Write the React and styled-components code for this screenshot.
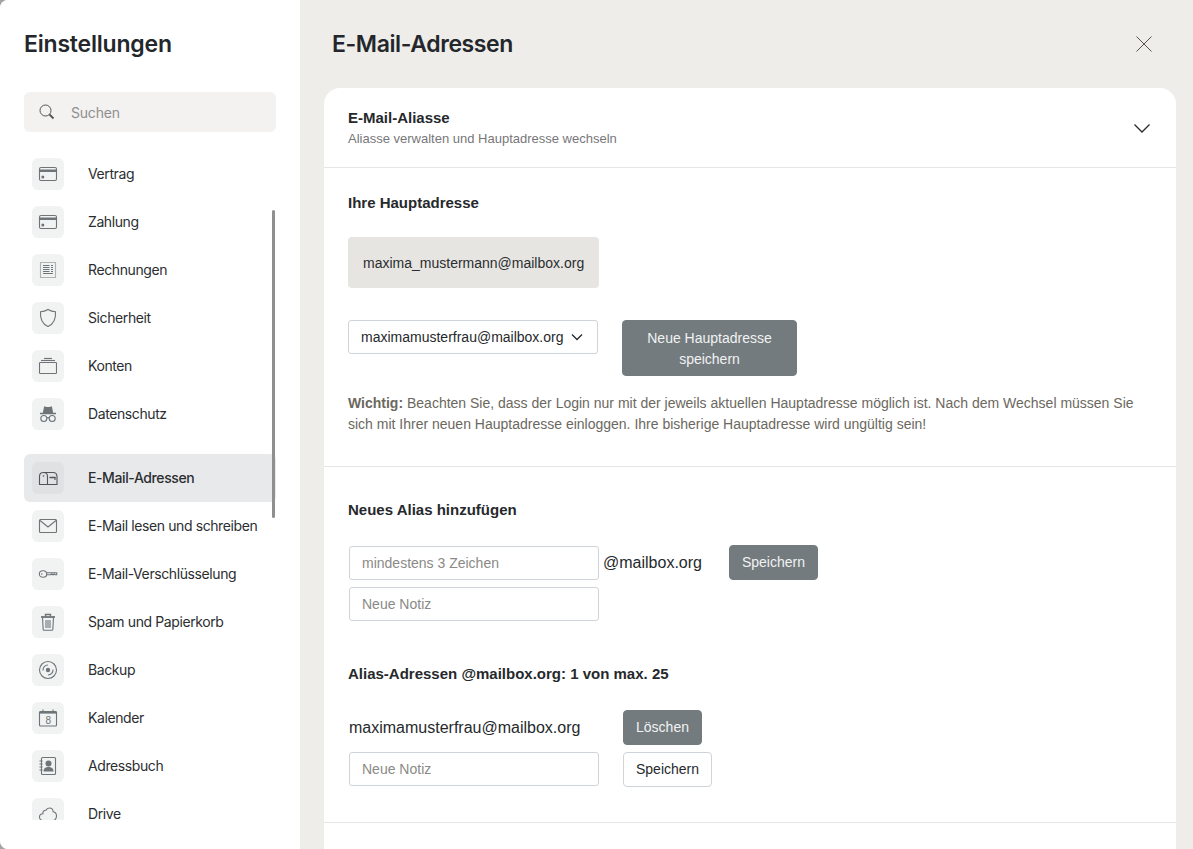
import React from "react";
import styled, { createGlobalStyle } from "styled-components";

const Global = createGlobalStyle`
  html, body { margin: 0; padding: 0; height: 100%; background: #a3a3a3; overflow: hidden; }
  * { box-sizing: border-box; }
  body { font-family: "Liberation Sans", Arial, sans-serif; }
`;

const Modal = styled.div`
  width: 1193px; height: 849px; display: flex; overflow: hidden;
  border-radius: 8px 0 0 8px; background: #eeede9;
`;
const Sidebar = styled.aside`
  width: 300px; flex: none; background: #fff; padding: 0 24px; position: relative;
  display: flex; flex-direction: column; height: 849px;
`;
const heading = `
  font-family: Inter, "Noto Sans", sans-serif; font-weight: 600; font-size: 23px;
  letter-spacing: -0.2px; color: #23272b; margin: 0; line-height: 28px;
`;
const SideTitle = styled.h1`${heading} padding-top: 30px; height: 92px;`;
const Search = styled.label`
  height: 40px; background: #f3f2f0; border-radius: 6px; display: flex; align-items: center;
  padding-left: 15px; gap: 16px; flex: none;
`;
const SearchInput = styled.input`
  border: 0; background: transparent; outline: 0; flex: 1; min-width: 0; padding: 0;
  font: 400 14px Inter, sans-serif; letter-spacing: -0.2px; color: #333;
  &::placeholder { color: #8f8f8f; opacity: 1; }
`;
const NavScroll = styled.nav`
  margin-top: 18px; height: 670px; overflow: hidden; flex: none;
`;
const NavGroup = styled.div`
  display: flex; flex-direction: column;
  & + & { margin-top: 16px; }
`;
const NavItem = styled.a`
  height: 48px; display: flex; align-items: center; padding-left: 8px; gap: 24px; flex: none;
  border-radius: 6px; background: ${p => (p.$active ? "#e8e9ea" : "transparent")};
  font: ${p => (p.$active ? 500 : 400)} 14px Inter, sans-serif; letter-spacing: -0.4px; color: #2b2e31;
`;
const NavLabel = styled.span`padding-bottom: 2px;`;
const IconBox = styled.span`
  width: 32px; height: 32px; border-radius: 6px; display: flex; align-items: center; justify-content: center;
  flex: none; background: ${p => (p.$active ? "#dfe1e2" : "#f1f2f2")};
`;
const ScrollThumb = styled.div`
  position: absolute; left: 272px; top: 210px; width: 3px; height: 308px; background: #8f8f8f; border-radius: 2px;
`;

const Main = styled.main`
  flex: 1; min-width: 0; padding: 0 17px 0 24px; display: flex; flex-direction: column;
`;
const MainHead = styled.header`
  height: 88px; flex: none; display: flex; align-items: center; justify-content: space-between;
  padding: 0 23px 0 8px;
`;
const MainTitle = styled.h2`${heading} letter-spacing: -0.4px;`;
const CloseBtn = styled.button`
  border: 0; background: transparent; padding: 0; width: 18px; height: 18px; display: flex;
`;
const Card = styled.section`
  background: #fff; border-radius: 16px 16px 0 0; flex: 1; overflow: hidden;
`;
const CardHead = styled.div`
  height: 80px; border-bottom: 1px solid #e6e6e6; padding: 21px 25px 0 24px; display: flex;
  justify-content: space-between; align-items: flex-start;
`;
const CardTitle = styled.div`font-size: 15px; font-weight: 700; color: #26292c; line-height: 18px;`;
const CardSub = styled.div`font-size: 13px; color: #77777a; line-height: 16px; margin-top: 4px;`;
const ChevronWrap = styled.span`display: flex; margin-top: 13px;`;
const Section = styled.div`
  padding: ${p => p.$pad || "26px 24px 0"}; height: ${p => p.$h}px; border-bottom: 1px solid #e6e6e6;
`;
const Label = styled.h3`
  margin: 0; font-size: 15px; font-weight: 700; color: #26292c; line-height: 18px;
`;
const Primary = styled.div`
  margin-top: 25px; width: 251px; height: 51px; background: #e7e5e1; border-radius: 4px; color: #2b2d30;
  font-size: 14px; display: flex; align-items: center; padding-left: 15px;
`;
const SelectRow = styled.div`display: flex; align-items: flex-start; gap: 24px; margin-top: 32px;`;
const Select = styled.div`
  width: 250px; height: 34px; border: 1px solid #cfd3da; border-radius: 3px; display: flex; align-items: center;
  justify-content: space-between; padding: 0 14px 0 12px; font-size: 14px; color: #26292c; background: #fff;
`;
const Btn = styled.button`
  font: 400 14px/21px "Liberation Sans", Arial, sans-serif; border-radius: 4px; text-align: center;
  padding: 0 12px; width: ${p => p.$w}px; height: ${p => p.$h}px; flex: none;
  background: ${p => (p.$outline ? "#fff" : "#737b7f")}; color: ${p => (p.$outline ? "#26292c" : "#f1f2f2")};
  border: 1px solid ${p => (p.$outline ? "#cfd3da" : "#737b7f")};
`;
const TallBtn = styled(Btn)`padding-top: 2px;`;
const RaisedBtn = styled(Btn)`align-self: flex-start; margin-top: -1px;`;
const Note = styled.p`
  margin: 17px 0 0; font-size: 14px; line-height: 21px; color: #6b6860;
  b { font-weight: 700; }
`;
const AliasGrid = styled.div`
  display: grid; grid-template-columns: 250px auto; column-gap: 4px; row-gap: 7px; margin: 27px 0 0 1px;
  justify-content: start; align-items: center;
`;
const Field = styled.input`
  width: 250px; height: 34px; border: 1px solid #cfd3da; border-radius: 3px; padding: 0 12px; background: #fff;
  font: 400 14px "Liberation Sans", Arial, sans-serif; outline: 0;
  &::placeholder { color: #8a8a86; opacity: 1; }
`;
const Domain = styled.div`
  display: flex; align-items: center; font-size: 16px; color: #26292c; gap: 27px; height: 34px;
`;
const ExistingGrid = styled.div`
  display: grid; grid-template-columns: 250px auto; column-gap: 24px; row-gap: 7px; margin: 27px 0 0 1px;
  justify-content: start; align-items: center;
  ${Field} { align-self: start; }
`;
const AliasName = styled.div`font-size: 16px; color: #26292c;`;
const Spaced = styled.div`margin-top: ${p => p.$t}px;`;

const INK = "#6d7579";
const S = { fill: "none", stroke: INK, strokeWidth: 1.1 };
const Ico = ({ children }) => <svg width="20" height="20" viewBox="0 0 20 20" {...S}>{children}</svg>;

const CardIcon = () => (
  <Ico>
    <rect x="1.5" y="3.5" width="17" height="13" rx="1.5" />
    <rect x="1.5" y="5.500" width="17" height="2.500" fill={INK} stroke="none" />
    <circle cx="4.800" cy="13" r="1.500" fill={INK} stroke="none" />
  </Ico>
);
const icons = {
  card: <CardIcon />,
  invoice: (
    <Ico>
      <rect x="2.5" y="2.5" width="15" height="15" strokeDasharray="1 1" />
      <path d="M5 5.500h6.500M5 7.500h6.500M5 9.500h6.500M5 11.500h6.500M5 13.500h10M13 5.500h2M13 7.500h2M13 9.500h2M13 11.500h2" />
    </Ico>
  ),
  shield: <Ico><path d="M10 1.500c2.500 1.600 5 2.200 7.500 2.200.4 6.300-.8 11.800-7.500 14.800C3.300 15.500 2.100 10 2.500 3.700 5 3.700 7.500 3.100 10 1.500z" /></Ico>,
  accounts: (
    <Ico>
      <rect x="1.500" y="6.500" width="17" height="11" rx=".8" />
      <path d="M3 4.500h14" /><path d="M6 2.500h8" strokeWidth="1.200" />
    </Ico>
  ),
  privacy: (
    <Ico>
      <path d="M4.800 9l1.200-6q.2-.8 1-.6 3 1 6 0 .8-.2 1 .6l1.200 6z" fill={INK} stroke="none" />
      <path d="M2 9.500h16" strokeWidth="1.500" />
      <circle cx="5.800" cy="14.500" r="3" /><circle cx="14.200" cy="14.500" r="3" />
      <path d="M8.800 14c.8-.5 1.600-.5 2.400 0" />
    </Ico>
  ),
  mailbox: (
    <Ico>
      <path d="M5.500 4.500h9.500q4 0 4 4v8H9.500" stroke="#4f5559" />
      <path d="M1.500 16.500v-8q0-4 4-4t4 4v8z" stroke="#4f5559" />
      <path d="M11.500 9.500h6" strokeWidth="1.500" stroke="#4f5559" /><path d="M17 9v3" stroke="#4f5559" />
      <circle cx="5.500" cy="8" r=".8" fill="#4f5559" stroke="none" />
    </Ico>
  ),
  mail: <Ico><rect x="1.500" y="3.500" width="17" height="13" rx="1" /><path d="M2 4.500l8 6.500 8-6.500" /></Ico>,
  key: (
    <Ico>
      <ellipse cx="5" cy="10" rx="3.700" ry="3.300" />
      <circle cx="3.800" cy="10" r=".8" fill={INK} stroke="none" />
      <path d="M8.700 8.800h10v2h-1.500l-.7-.7-.8.7-.8-.7-.8.7-.8-.7-.8.7H8.700" />
    </Ico>
  ),
  trash: (
    <Ico>
      <path d="M3 5h14" strokeWidth="1.800" /><path d="M7.500 4.500V2.500h5v2" strokeWidth="1.400" />
      <path d="M4.500 5.500l.7 12q0 .8.800.8h8q.8 0 .8-.8l.7-12" />
      <path d="M8 8v8M10 8v8M12 8v8" />
    </Ico>
  ),
  disc: (
    <Ico>
      <circle cx="10" cy="10" r="8.500" /><circle cx="10" cy="10" r="2.200" fill={INK} stroke="none" />
      <path d="M5 10.500c-.3-3 2-5.500 5-5.500M15 9.500c.3 3-2 5.500-5 5.500" />
    </Ico>
  ),
  calendar: (
    <Ico>
      <rect x="1.500" y="3.500" width="17" height="14.500" rx="1" />
      <path d="M1.500 4.500h17" strokeWidth="2.200" /><path d="M5 1.500v2M15 1.500v2" />
      <text x="10" y="15.500" textAnchor="middle" fontSize="10" fontFamily="Liberation Sans, sans-serif" fill={INK} stroke="none">8</text>
    </Ico>
  ),
  contacts: (
    <Ico>
      <rect x="3.500" y="1.500" width="14" height="17" rx="1" />
      <path d="M1.500 5h3M1.500 8h3M1.500 11h3M1.500 14h3" />
      <circle cx="10.500" cy="7.500" r="3" fill={INK} stroke="none" />
      <path d="M5.500 15.500c0-3.500 2.500-4.500 5-4.500s5 1 5 4.500z" fill={INK} stroke="none" />
    </Ico>
  ),
  cloud: <Ico><path d="M5 16.500c-2 0-3.500-1.500-3.500-3.500S3 9.700 5 9.700C4.500 7.500 6 6 8 6.200 8.700 4.500 10 4 11.500 4c2 0 3.500 1.600 3.700 3.800 2 .4 3.300 2 3.300 4.200s-1.500 4.500-3.500 4.500c-.8 1.300-2 1.300-3 0z" /></Ico>,
};

const first = [["Vertrag", "card"], ["Zahlung", "card"], ["Rechnungen", "invoice"], ["Sicherheit", "shield"], ["Konten", "accounts"], ["Datenschutz", "privacy"]];
const second = [["E-Mail-Adressen", "mailbox", true], ["E-Mail lesen und schreiben", "mail"], ["E-Mail-Verschlüsselung", "key"], ["Spam und Papierkorb", "trash"], ["Backup", "disc"], ["Kalender", "calendar"], ["Adressbuch", "contacts"], ["Drive", "cloud"]];

const Row = ({ label, icon, active }) => (
  <NavItem $active={active}>
    <IconBox $active={active}>{icons[icon]}</IconBox>
    <NavLabel>{label}</NavLabel>
  </NavItem>
);

export default function App() {
  return (
    <Modal>
      <Global />
      <Sidebar>
        <SideTitle>Einstellungen</SideTitle>
        <Search>
          <svg width="16" height="16" viewBox="0 0 16 16" fill="none" stroke="#55524c">
            <circle cx="6.500" cy="6.500" r="5.500" />
            <path d="M10.500 10.500l4 4" strokeWidth="1.800" />
          </svg>
          <SearchInput placeholder="Suchen" />
        </Search>
        <NavScroll>
          <NavGroup>{first.map(([l, i]) => <Row key={l} label={l} icon={i} />)}</NavGroup>
          <NavGroup>{second.map(([l, i, a]) => <Row key={l} label={l} icon={i} active={a} />)}</NavGroup>
        </NavScroll>
        <ScrollThumb />
      </Sidebar>
      <Main>
        <MainHead>
          <MainTitle>E-Mail-Adressen</MainTitle>
          <CloseBtn aria-label="Schließen">
            <svg width="18" height="18" viewBox="0 0 18 18" fill="none" stroke="#55524c"><path d="M1.500 1.500l15 15M16.500 1.500l-15 15" /></svg>
          </CloseBtn>
        </MainHead>
        <Card>
          <CardHead>
            <div>
              <CardTitle>E-Mail-Aliasse</CardTitle>
              <CardSub>Aliasse verwalten und Hauptadresse wechseln</CardSub>
            </div>
            <ChevronWrap>
              <svg width="18" height="12" viewBox="0 0 18 12" fill="none" stroke="#26292c" strokeWidth="1.300"><path d="M1.500 2.500L9 10l7.500-7.500" /></svg>
            </ChevronWrap>
          </CardHead>
          <Section $h={299}>
            <Label>Ihre Hauptadresse</Label>
            <Primary>maxima_mustermann@mailbox.org</Primary>
            <SelectRow>
              <Select>
                maximamusterfrau@mailbox.org
                <svg width="12" height="8" viewBox="0 0 12 8" fill="none" stroke="#26292c" strokeWidth="1.300"><path d="M1 1.500l5 5 5-5" /></svg>
              </Select>
              <TallBtn $w={175} $h={56}>Neue Hauptadresse speichern</TallBtn>
            </SelectRow>
            <Note>
              <b>Wichtig:</b> Beachten Sie, dass der Login nur mit der jeweils aktuellen Hauptadresse möglich ist. Nach dem Wechsel müssen Sie sich mit Ihrer neuen Hauptadresse einloggen. Ihre bisherige Hauptadresse wird ungültig sein!
            </Note>
          </Section>
          <Section $h={356} $pad="34px 24px 0">
            <Label>Neues Alias hinzufügen</Label>
            <AliasGrid>
              <Field placeholder="mindestens 3 Zeichen" />
              <Domain>
                @mailbox.org
                <RaisedBtn $w={89} $h={35}>Speichern</RaisedBtn>
              </Domain>
              <Field placeholder="Neue Notiz" />
            </AliasGrid>
            <Spaced $t={44}><Label>Alias-Adressen @mailbox.org: 1 von max. 25</Label></Spaced>
            <ExistingGrid>
              <AliasName>maximamusterfrau@mailbox.org</AliasName>
              <Btn $w={79} $h={35}>Löschen</Btn>
              <Field placeholder="Neue Notiz" />
              <Btn $w={89} $h={35} $outline>Speichern</Btn>
            </ExistingGrid>
          </Section>
        </Card>
      </Main>
    </Modal>
  );
}
